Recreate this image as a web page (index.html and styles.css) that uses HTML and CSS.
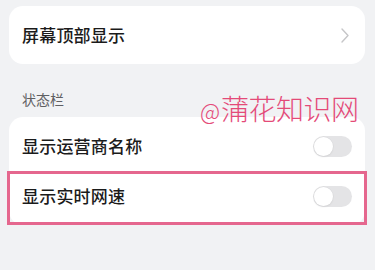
FILE: index.html
```html
<!DOCTYPE html>
<html lang="zh-CN">
<head>
	<meta charset="UTF-8">
	<title>状态栏</title>
	<link rel="stylesheet" href="styles.css">
</head>
<body>
	<div class="page">
		<div class="card card-single">
			<div class="row">
				<span class="row-title">屏幕顶部显示</span>
				<svg class="chevron" width="8" height="15" viewBox="0 0 8 15">
					<polyline points="1,1 7,7.5 1,14" fill="none" stroke="#c6c6c8" stroke-width="1.4" stroke-linecap="round" stroke-linejoin="round"/>
				</svg>
			</div>
		</div>

		<div class="section-label">状态栏</div>

		<div class="card card-list">
			<div class="row">
				<span class="row-title">显示运营商名称</span>
				<span class="switch"><span class="knob"></span></span>
			</div>
			<div class="row row-marked">
				<span class="row-title">显示实时网速</span>
				<span class="switch"><span class="knob"></span></span>
			</div>
		</div>

		<!-- watermark sits over the page -->
		<div class="watermark"><span class="at">@</span>蒲花知识网</div>
	</div>
</body>
</html>
```

FILE: styles.css
```css
* {
	margin: 0;
	padding: 0;
	box-sizing: border-box;
}

body {
	background: #f1f2f4;
	font-family: "Noto Sans CJK SC", "Noto Sans", sans-serif;
	color: #1b1b1b;
}

.page {
	position: relative;
	width: 375px;
	height: 270px;
	padding: 6px 10px 0 9px;
}

.card {
	background: #fff;
	border-radius: 14px;
}

.card-single {
	height: 58px;
	display: flex;
	align-items: center;
}

.card-single .row {
	width: 100%;
	padding: 0 16px 0 13px;
}

.card-list {
	padding: 4px 0;
}

.row {
	display: flex;
	align-items: center;
	justify-content: space-between;
	height: 50px;
	padding: 0 13px;
}

.row-title {
	font-size: 17px;
	line-height: 20px;
	font-weight: 500;
	letter-spacing: 0.2px;
}

.chevron {
	display: block;
}

.section-label {
	padding: 27px 0 10px 13px;
	font-size: 14px;
	line-height: 16px;
	color: #5f5f62;
}

/* pink highlight box round the second row */
.row-marked {
	position: relative;
}

.row-marked::after {
	content: "";
	position: absolute;
	top: 0;
	bottom: -4px;
	left: -2px;
	right: -2px;
	border: 3px solid #e5678e;
}

.switch {
	position: relative;
	width: 39px;
	height: 21px;
	border-radius: 11px;
	background: #e4e4e6;
}

.knob {
	position: absolute;
	top: 1px;
	left: 1px;
	width: 19px;
	height: 19px;
	border-radius: 50%;
	background: #fff;
	box-shadow: 0 0 0 0.5px #d8d8da, 0 1px 2px rgba(0, 0, 0, 0.08);
}

.watermark {
	position: absolute;
	left: 200px;
	top: 88px;
	font-size: 28px;
	line-height: 40px;
	font-weight: 300;
	color: #e44a78;
	letter-spacing: -0.5px;
}

.watermark .at {
	font-size: 22px;
	letter-spacing: 1px;
}
```
